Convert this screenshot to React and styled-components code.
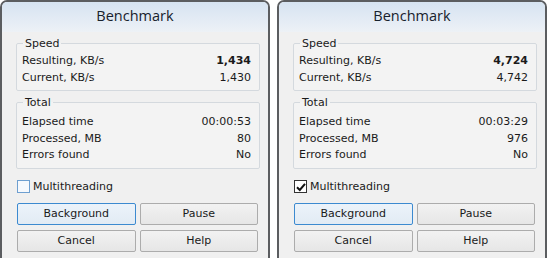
import React from "react"
import styled, { createGlobalStyle } from "styled-components"

const GlobalStyle = createGlobalStyle`
  html, body {
    margin: 0;
    padding: 0;
    background: #ffffff;
  }
  body {
    font-family: "DejaVu Sans", "Liberation Sans", sans-serif;
    font-size: 11px;
    color: #1a1a1a;
  }
`

const Desktop = styled.div`
  display: flex;
  gap: 7px;
  width: 548px;
  height: 258px;
  overflow: hidden;
`

const Window = styled.div`
  width: 270px;
  height: 270px;
  box-sizing: border-box;
  border: 2px solid #5b5d60;
  border-bottom: none;
  border-radius: 7px 7px 0 0;
  background: #f0f0f0;
  display: flex;
  flex-direction: column;
  overflow: hidden;
`

const TitleBar = styled.div`
  height: 30px;
  flex-shrink: 0;
  display: flex;
  justify-content: center;
  padding-top: 5px;
  box-sizing: border-box;
  background: linear-gradient(#d6e3f1, #e6edf5 70%, #edf1f6);
  font-family: "Open Sans", "Noto Sans", sans-serif;
  font-size: 14.5px;
  color: #17212c;
  line-height: 18px;
`

const Body = styled.div`
  display: flex;
  flex-direction: column;
  padding: 4px 8px 0 14px;
  gap: 4px;
`

const Group = styled.fieldset`
  margin: 0;
  padding: ${(p) => (p.$loose ? "4px" : "2px")} 8px 4px 5px;
  border: 1px solid #d4d9de;
  border-radius: 2px;
  background: #f3f3f3;
`

const Legend = styled.legend`
  padding: 0 2px;
  margin-left: 1px;
  line-height: 15px;
`

const Row = styled.div`
  display: flex;
  justify-content: space-between;
  line-height: 16.5px;
`

const Value = styled.span`
  font-weight: ${(p) => (p.$bold ? 700 : 400)};
`

const CheckLine = styled.label`
  display: flex;
  align-items: center;
  gap: 3px;
  margin: 6px 0 4px 1px;
  line-height: 16px;
`

const Box = styled.span`
  width: 11px;
  height: 11px;
  border: 1px solid ${(p) => (p.$checked ? "#333333" : "#6e9fd0")};
  background: ${(p) => (p.$checked ? "#ffffff" : "#f6f9fd")};
  display: flex;
  align-items: center;
  justify-content: center;
`

const Buttons = styled.div`
  display: grid;
  grid-template-columns: 1fr 1fr;
  gap: 5px 4px;
  padding: 0 2px 0 1px;
`

const Button = styled.button`
  height: 22px;
  margin: 0;
  padding: 0;
  font-family: inherit;
  font-size: 11px;
  color: #1a1a1a;
  border: 1px solid ${(p) => (p.$focused ? "#3c8ad0" : "#acacac")};
  border-radius: 2px;
  background: ${(p) =>
    p.$focused
      ? "linear-gradient(#ecf3fa, #e2ebf4)"
      : "linear-gradient(#f2f2f2, #e6e6e6)"};
`

const Tick = () => (
  <svg width="10" height="10" viewBox="0 0 10 10">
    <path d="M1 5.2 L3.8 8 L9 1.8" fill="none" stroke="#111" strokeWidth="2" />
  </svg>
)

const BenchmarkWindow = ({ data }) => (
  <Window>
    <TitleBar>Benchmark</TitleBar>
    <Body>
      <Group>
        <Legend>Speed</Legend>
        <Row>
          <span>Resulting, KB/s</span>
          <Value $bold>{data.resulting}</Value>
        </Row>
        <Row>
          <span>Current, KB/s</span>
          <Value>{data.current}</Value>
        </Row>
      </Group>
      <Group $loose>
        <Legend>Total</Legend>
        <Row>
          <span>Elapsed time</span>
          <Value>{data.elapsed}</Value>
        </Row>
        <Row>
          <span>Processed, MB</span>
          <Value>{data.processed}</Value>
        </Row>
        <Row>
          <span>Errors found</span>
          <Value>No</Value>
        </Row>
      </Group>
      <CheckLine>
        <Box $checked={data.multi}>{data.multi && <Tick />}</Box>
        Multithreading
      </CheckLine>
      <Buttons>
        <Button $focused>Background</Button>
        <Button>Pause</Button>
        <Button>Cancel</Button>
        <Button>Help</Button>
      </Buttons>
    </Body>
  </Window>
)

const runs = [
  { resulting: "1,434", current: "1,430", elapsed: "00:00:53", processed: "80", multi: false },
  { resulting: "4,724", current: "4,742", elapsed: "00:03:29", processed: "976", multi: true },
]

export default function App() {
  return (
    <>
      <GlobalStyle />
      <Desktop>
        {runs.map((r, i) => (
          <BenchmarkWindow key={i} data={r} />
        ))}
      </Desktop>
    </>
  )
}
